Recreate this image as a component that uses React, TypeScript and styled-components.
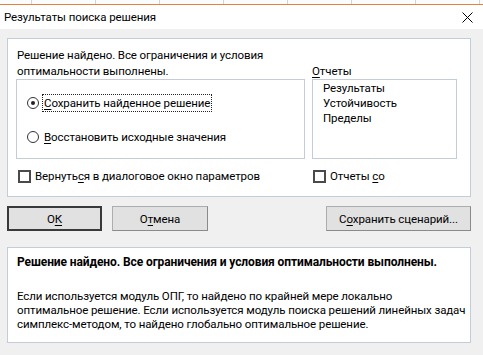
import React from 'react'
import styled, { createGlobalStyle } from 'styled-components'

const GlobalStyle = createGlobalStyle`
  html, body {
    margin: 0;
    padding: 0;
    background: #f0f0f0;
  }
  * {
    box-sizing: border-box;
  }
`

const Window = styled.div`
  width: 483px;
  height: 355px;
  overflow: hidden;
  background: #f0f0f0;
  font-family: Roboto, 'Noto Sans', sans-serif;
  font-size: 11.5px;
  letter-spacing: -0.1px;
  color: #000;
`

// sliver of the spreadsheet visible above the dialog
const SheetStrip = styled.div`
  height: 5px;
  background-color: #fbfbfb;
  background-image: repeating-linear-gradient(
    to right,
    transparent 0,
    transparent 31px,
    #d4d4d4 31px,
    #d4d4d4 32px,
    transparent 32px,
    transparent 64px
  );
  border-bottom: 1px solid #e3823f;
`

const TitleBar = styled.div`
  height: 24px;
  background: #fff;
  display: flex;
  align-items: center;
  justify-content: space-between;
  padding: 0 10px 0 4px;
`

const Title = styled.span`
  line-height: 16px;
`

const CloseIcon = () => (
  <svg width="11" height="11" viewBox="0 0 11 11">
    <path d="M0.5 0.5 L10.5 10.5 M10.5 0.5 L0.5 10.5" stroke="#000" strokeWidth="1" />
  </svg>
)

const Body = styled.div`
  padding: 9px 12px 0 7px;
  display: flex;
  flex-direction: column;
`

const Panel = styled.div`
  background: #fff;
  border: 1px solid #c3cdd8;
  height: 159px;
  padding: 8px 0 0 8px;
`

const Grid = styled.div`
  display: grid;
  grid-template-columns: 289px 145px;
  column-gap: 7px;
`

const Message = styled.div`
  padding-left: 1px;
  line-height: 16px;
  align-self: end;
`

const ListLabel = styled.div`
  line-height: 16px;
  align-self: end;
`

const GroupBox = styled.div`
  height: 80px;
  border: 1px solid #c3cdd8;
  padding: 14px 0 0 10px;
  display: flex;
  flex-direction: column;
  gap: 16px;
`

const RadioRow = styled.div`
  display: flex;
  align-items: center;
  height: 18px;
`

const RadioCircle = styled.span<{ $checked?: boolean }>`
  width: 12px;
  height: 12px;
  border-radius: 50%;
  border: 1.5px solid #333;
  display: flex;
  align-items: center;
  justify-content: center;
  margin-right: 3px;
  flex-shrink: 0;

  &::after {
    content: '';
    width: 4px;
    height: 4px;
    border-radius: 50%;
    background: ${({ $checked }) => ($checked ? '#222' : 'transparent')};
  }
`

const RadioLabel = styled.span<{ $focused?: boolean }>`
  line-height: 16px;
  padding: 0 1px;
  border: 1px dotted ${({ $focused }) => ($focused ? '#222' : 'transparent')};
`

const ListBox = styled.div`
  height: 80px;
  border: 1px solid #c3cdd8;
  padding: 1px 0 0 10px;
  line-height: 15px;
`

const CheckRow = styled.div<{ $inset?: number }>`
  display: flex;
  align-items: center;
  margin-top: 10px;
  padding-left: ${({ $inset }) => $inset ?? 0}px;
  line-height: 14px;
`

const CheckBox = styled.span`
  width: 13px;
  height: 13px;
  border: 2px solid #4a4a4a;
  margin-right: 4px;
  flex-shrink: 0;
`

const ButtonRow = styled.div`
  display: flex;
  margin-top: 9px;
  height: 25px;
`

const Button = styled.button<{ $default?: boolean; $width: number; $push?: boolean }>`
  width: ${({ $width }) => $width}px;
  height: 25px;
  margin-left: ${({ $push }) => ($push ? 'auto' : '0')};
  margin-right: 10px;
  background: #e1e1e1;
  font-family: inherit;
  font-size: inherit;
  letter-spacing: inherit;
  color: #000;
  padding: 0;
  border: ${({ $default }) => ($default ? '2px solid #3a3a3a' : '1px solid #adadad')};
  border-right-color: ${({ $default }) => ($default ? '#3a3a3a' : '#8a8a8a')};
  border-bottom-color: ${({ $default }) => ($default ? '#3a3a3a' : '#8a8a8a')};

  &:last-child {
    margin-right: 0;
  }
`

const InfoPanel = styled.div`
  margin-top: 16px;
  height: 96px;
  background: #fff;
  border: 1px solid #c3cdd8;
  padding: 7px 9px 0 9px;
`

const InfoTitle = styled.div`
  font-size: 12px;
  letter-spacing: -0.1px;
  font-weight: bold;
  line-height: 15px;
  white-space: nowrap;
`

const InfoText = styled.div`
  margin-top: 19px;
  line-height: 14px;
  white-space: nowrap;
`

const Key = styled.span`
  text-decoration: underline;
  text-underline-offset: 2px;
`

export default function App() {
  return (
    <>
      <GlobalStyle />
      <Window>
        <SheetStrip />
        <TitleBar>
          <Title>Результаты поиска решения</Title>
          <CloseIcon />
        </TitleBar>
        <Body>
          <Panel>
            <Grid>
              <Message>
                Решение найдено. Все ограничения и условия
                <br />
                оптимальности выполнены.
              </Message>
              <ListLabel>
                <Key>О</Key>тчеты
              </ListLabel>
              <GroupBox>
                <RadioRow>
                  <RadioCircle $checked />
                  <RadioLabel $focused>
                    <Key>С</Key>охранить найденное решение
                  </RadioLabel>
                </RadioRow>
                <RadioRow>
                  <RadioCircle />
                  <RadioLabel>
                    <Key>В</Key>осстановить исходные значения
                  </RadioLabel>
                </RadioRow>
              </GroupBox>
              <ListBox>
                <div>Результаты</div>
                <div>Устойчивость</div>
                <div>Пределы</div>
              </ListBox>
              <CheckRow $inset={2}>
                <CheckBox />
                <span>
                  Вернуть<Key>с</Key>я в диалоговое окно параметров
                </span>
              </CheckRow>
              <CheckRow $inset={1}>
                <CheckBox />
                <span>
                  Отчеты <Key>с</Key>о
                </span>
              </CheckRow>
            </Grid>
          </Panel>
          <ButtonRow>
            <Button $default $width={95}>
              О<Key>К</Key>
            </Button>
            <Button $width={96}>
              О<Key>т</Key>мена
            </Button>
            <Button $width={145} $push>
              С<Key>о</Key>хранить сценарий...
            </Button>
          </ButtonRow>
          <InfoPanel>
            <InfoTitle>Решение найдено. Все ограничения и условия оптимальности выполнены.</InfoTitle>
            <InfoText>
              Если используется модуль ОПГ, то найдено по крайней мере локально
              <br />
              оптимальное решение. Если используется модуль поиска решений линейных задач
              <br />
              симплекс-методом, то найдено глобально оптимальное решение.
            </InfoText>
          </InfoPanel>
        </Body>
      </Window>
    </>
  )
}
